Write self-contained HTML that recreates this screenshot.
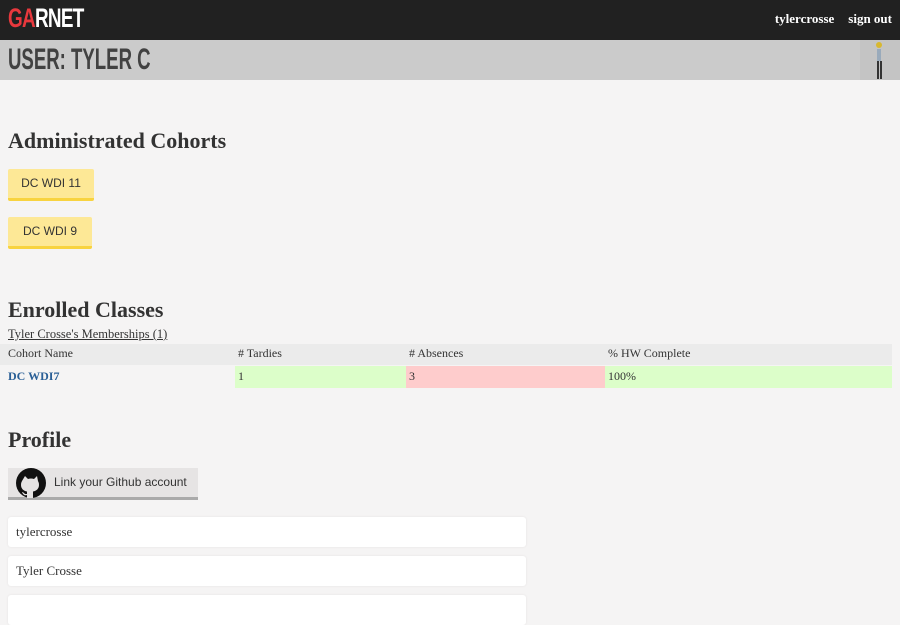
<!DOCTYPE html>
<html><head><style>
html{overflow:hidden}
body{margin:0;width:900px;height:600px;overflow:hidden;background:#f5f4f4;font-family:"Liberation Serif",serif;color:#333}
.top{height:40px;background:#212121;position:relative}
.logo{position:absolute;left:8px;top:3px;font:bold 27px "Liberation Sans",sans-serif;transform:scaleX(.7);transform-origin:left;color:#fff;letter-spacing:-1px}
.logo span{color:#e8383d}
.nav{position:absolute;right:8px;top:11px;color:#fff;font-size:13px;font-weight:bold}
.nav span{margin-left:14px}
.bar{height:40px;background:#cbcbcb;position:relative}
.bar h1{margin:0;position:absolute;left:8px;top:3px;font:bold 30px "Liberation Sans",sans-serif;color:#424242;transform:scaleX(.62);transform-origin:left}
.av{position:absolute;right:0;top:0;width:40px;height:40px;background:#c4c4c4}
h2{position:absolute;left:8px;margin:0;font-size:22px;font-weight:bold;color:#333}
.btn{position:absolute;left:8px;background:#fde896;border-bottom:3px solid #f8d33f;font:12px "Liberation Sans",sans-serif;color:#333;text-align:center;line-height:29px;border-radius:2px}
.abs{position:absolute}
.cell{position:absolute;font-size:12px;line-height:21px;padding-left:3px;box-sizing:border-box}
.inp{position:absolute;left:8px;width:518px;height:30px;background:#fff;border-radius:3px;box-shadow:0 0 2px #e4e2e2;font-size:13px;line-height:30px;padding-left:8px;box-sizing:border-box}
</style></head><body>
<div class="top"><div class="logo"><span>GA</span>RNET</div><div class="nav"><span>tylercrosse</span><span>sign out</span></div></div>
<div class="bar"><h1>USER: TYLER C</h1><div class="av"><svg width="40" height="40"><circle cx="19" cy="5" r="3" fill="#d8b830"/><rect x="17" y="9" width="4" height="12" fill="#9ab"/><rect x="17" y="21" width="2" height="18" fill="#333"/><rect x="20" y="21" width="2" height="18" fill="#333"/></svg></div></div>
<h2 style="top:128px">Administrated Cohorts</h2>
<div class="btn" style="top:169px;width:86px">DC WDI 11</div>
<div class="btn" style="top:217px;width:84px">DC WDI 9</div>
<h2 style="top:297px">Enrolled Classes</h2>
<div class="abs" style="left:8px;top:327px;font-size:12.5px;text-decoration:underline">Tyler Crosse's Memberships (1)</div>
<div class="abs" style="left:0;top:344px;width:892px;height:21px;background:#ebebeb"></div>
<div class="cell" style="left:5px;top:343px">Cohort Name</div>
<div class="cell" style="left:235px;top:343px"># Tardies</div>
<div class="cell" style="left:406px;top:343px"># Absences</div>
<div class="cell" style="left:605px;top:343px">% HW Complete</div>
<div class="cell" style="left:5px;top:366px;color:#2a5f96;font-weight:bold">DC WDI7</div>
<div class="cell" style="left:235px;top:366px;width:171px;height:22px;background:#dcfec9">1</div>
<div class="cell" style="left:406px;top:366px;width:199px;height:22px;background:#fecccc">3</div>
<div class="cell" style="left:605px;top:366px;width:287px;height:22px;background:#dcfec9">100%</div>
<h2 style="top:427px">Profile</h2>
<div class="abs" style="left:8px;top:468px;width:190px;height:29px;background:#e6e4e4;border-bottom:3px solid #aaa;font:12px 'Liberation Sans',sans-serif;line-height:29px">
<svg class="abs" style="left:8px;top:0" width="30" height="30" viewBox="0 0 30 30"><circle cx="15" cy="15" r="15" fill="#111"/><path fill="#e6e4e4" d="M9 8l3 3a10 10 0 0 1 6 0l3-3 1 5a7 7 0 0 1 1 4c0 4-3 6-6 6.5v6.5h-6v-3c-3 1-4-1-5-3 1 0 2 1 3 2l2 0v-2.5c-3-.5-6-2.5-6-6.5a7 7 0 0 1 1-4z"/></svg>
<span class="abs" style="left:46px;top:0">Link your Github account</span></div>
<div class="inp" style="top:517px">tylercrosse</div>
<div class="inp" style="top:556px">Tyler Crosse</div>
<div class="inp" style="top:595px"></div>
</body></html>
